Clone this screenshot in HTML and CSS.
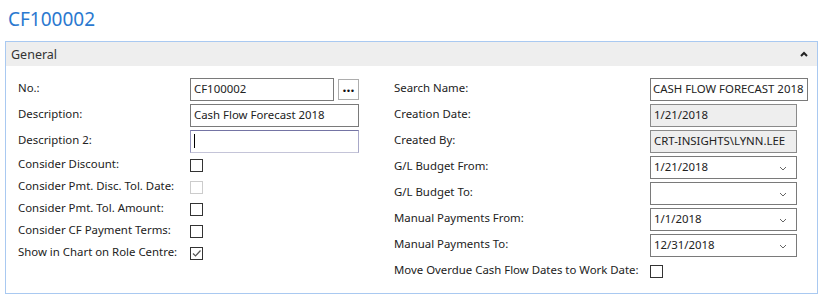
FILE: index.html
```html
<!DOCTYPE html>
<html lang="en">
<head>
    <meta charset="UTF-8">
    <title>CF100002</title>
    <link rel="stylesheet" href="styles.css">
</head>
<body>
    <h1 class="page-title">CF100002</h1>
    <div class="fasttab">
        <div class="fasttab-header">
            <span>General</span>
            <svg class="collapse" width="8" height="6" viewBox="0 0 8 6"><polyline points="1,5 4,2 7,5" fill="none" stroke="#222" stroke-width="2"/></svg>
        </div>
        <div class="fasttab-body">
            <div class="col col-left">
                <div class="row">
                    <label>No.:</label>
                    <div class="field-group">
                        <div class="input short">CF100002</div>
                        <button class="assist">...</button>
                    </div>
                </div>
                <div class="row">
                    <label>Description:</label>
                    <div class="input">Cash Flow Forecast 2018</div>
                </div>
                <div class="row">
                    <label>Description 2:</label>
                    <div class="input focused"><span class="caret"></span></div>
                </div>
                <div class="row check-row">
                    <label>Consider Discount:</label>
                    <span class="checkbox"></span>
                </div>
                <div class="row check-row">
                    <label>Consider Pmt. Disc. Tol. Date:</label>
                    <span class="checkbox disabled"></span>
                </div>
                <div class="row check-row">
                    <label>Consider Pmt. Tol. Amount:</label>
                    <span class="checkbox"></span>
                </div>
                <div class="row check-row">
                    <label>Consider CF Payment Terms:</label>
                    <span class="checkbox"></span>
                </div>
                <div class="row check-row">
                    <label>Show in Chart on Role Centre:</label>
                    <span class="checkbox checked">
                        <svg width="11" height="11" viewBox="0 0 11 11"><polyline points="2,5.5 4.5,8 9.5,2.5" fill="none" stroke="#555" stroke-width="1.2"/></svg>
                    </span>
                </div>
            </div>
            <div class="col col-right">
                <div class="row">
                    <label>Search Name:</label>
                    <div class="input wide">CASH FLOW FORECAST 2018</div>
                </div>
                <div class="row">
                    <label>Creation Date:</label>
                    <div class="input readonly">1/21/2018</div>
                </div>
                <div class="row">
                    <label>Created By:</label>
                    <div class="input readonly">CRT-INSIGHTS\LYNN.LEE</div>
                </div>
                <div class="row">
                    <label>G/L Budget From:</label>
                    <div class="input select">1/21/2018<svg class="arrow" width="8" height="5" viewBox="0 0 8 5"><polyline points="1,1 4,4 7,1" fill="none" stroke="#666" stroke-width="1"/></svg></div>
                </div>
                <div class="row">
                    <label>G/L Budget To:</label>
                    <div class="input select"><svg class="arrow" width="8" height="5" viewBox="0 0 8 5"><polyline points="1,1 4,4 7,1" fill="none" stroke="#666" stroke-width="1"/></svg></div>
                </div>
                <div class="row">
                    <label>Manual Payments From:</label>
                    <div class="input select">1/1/2018<svg class="arrow" width="8" height="5" viewBox="0 0 8 5"><polyline points="1,1 4,4 7,1" fill="none" stroke="#666" stroke-width="1"/></svg></div>
                </div>
                <div class="row">
                    <label>Manual Payments To:</label>
                    <div class="input select">12/31/2018<svg class="arrow" width="8" height="5" viewBox="0 0 8 5"><polyline points="1,1 4,4 7,1" fill="none" stroke="#666" stroke-width="1"/></svg></div>
                </div>
                <div class="row">
                    <label>Move Overdue Cash Flow Dates to Work Date:</label>
                    <span class="checkbox"></span>
                </div>
            </div>
        </div>
    </div>
</body>
</html>
```

FILE: styles.css
```css
body {
    margin: 0;
    padding: 0 7px 0 5px;
    background: #ffffff;
    font-family: "Noto Sans", "Open Sans", sans-serif;
    font-size: 11.4px;
    color: #222222;
}
.page-title {
    margin: 0;
    padding: 6px 0 0 3px;
    height: 41px;
    box-sizing: border-box;
    font-size: 19px;
    font-weight: normal;
    color: #2b79d0;
}
.fasttab {
    border: 1px solid #a9c9f1;
}
.fasttab-header {
    height: 24px;
    background: #eeeeee;
    display: flex;
    align-items: center;
    justify-content: space-between;
    padding: 0 9px 0 5px;
    font-size: 12.5px;
    color: #333333;
}
.fasttab-body {
    display: flex;
    padding: 10px 0 9px 12px;
}
.col-left {
    width: 376px;
}
.col-right {
    flex: 1;
}
.row {
    display: flex;
    align-items: center;
    height: 26px;
}
.check-row {
    height: 22px;
}
.col-left label {
    width: 172px;
}
.col-right label {
    width: 256px;
}
label {
    flex-shrink: 0;
    white-space: nowrap;
    padding-bottom: 3px;
}
.field-group {
    display: flex;
    align-items: center;
    gap: 4px;
}
.input {
    box-sizing: border-box;
    width: 169px;
    height: 23px;
    border: 1px solid #7a7a7a;
    background: #ffffff;
    padding: 0 3px 1px;
    display: flex;
    align-items: center;
    white-space: nowrap;
    overflow: hidden;
    position: relative;
}
.input.short {
    width: 144px;
}
.col-right .input {
    width: 147px;
}
.col-right .input.wide {
    width: 158px;
    padding: 0 2px 1px;
}
.input.readonly {
    background: #eeeeee;
    border-color: #8a8a8a;
}
.input.focused {
    border-color: #7474a4 #a8a8c8 #c4c4d8 #9494bc;
    padding-bottom: 0;
}
.caret {
    width: 1px;
    height: 14px;
    background: #000000;
}
.input.select .arrow {
    position: absolute;
    right: 9px;
    top: 9px;
}
.assist {
    width: 21px;
    height: 21px;
    border: 1px solid #adadad;
    background: #ffffff;
    padding: 0 0 4px;
    font-family: inherit;
    font-size: 14px;
    font-weight: bold;
    line-height: 1;
    color: #111111;
}
.checkbox {
    box-sizing: border-box;
    width: 13px;
    height: 13px;
    border: 1px solid #333333;
    background: #ffffff;
    display: flex;
    align-items: center;
    justify-content: center;
}
.checkbox.disabled {
    border-color: #cccccc;
}
```
